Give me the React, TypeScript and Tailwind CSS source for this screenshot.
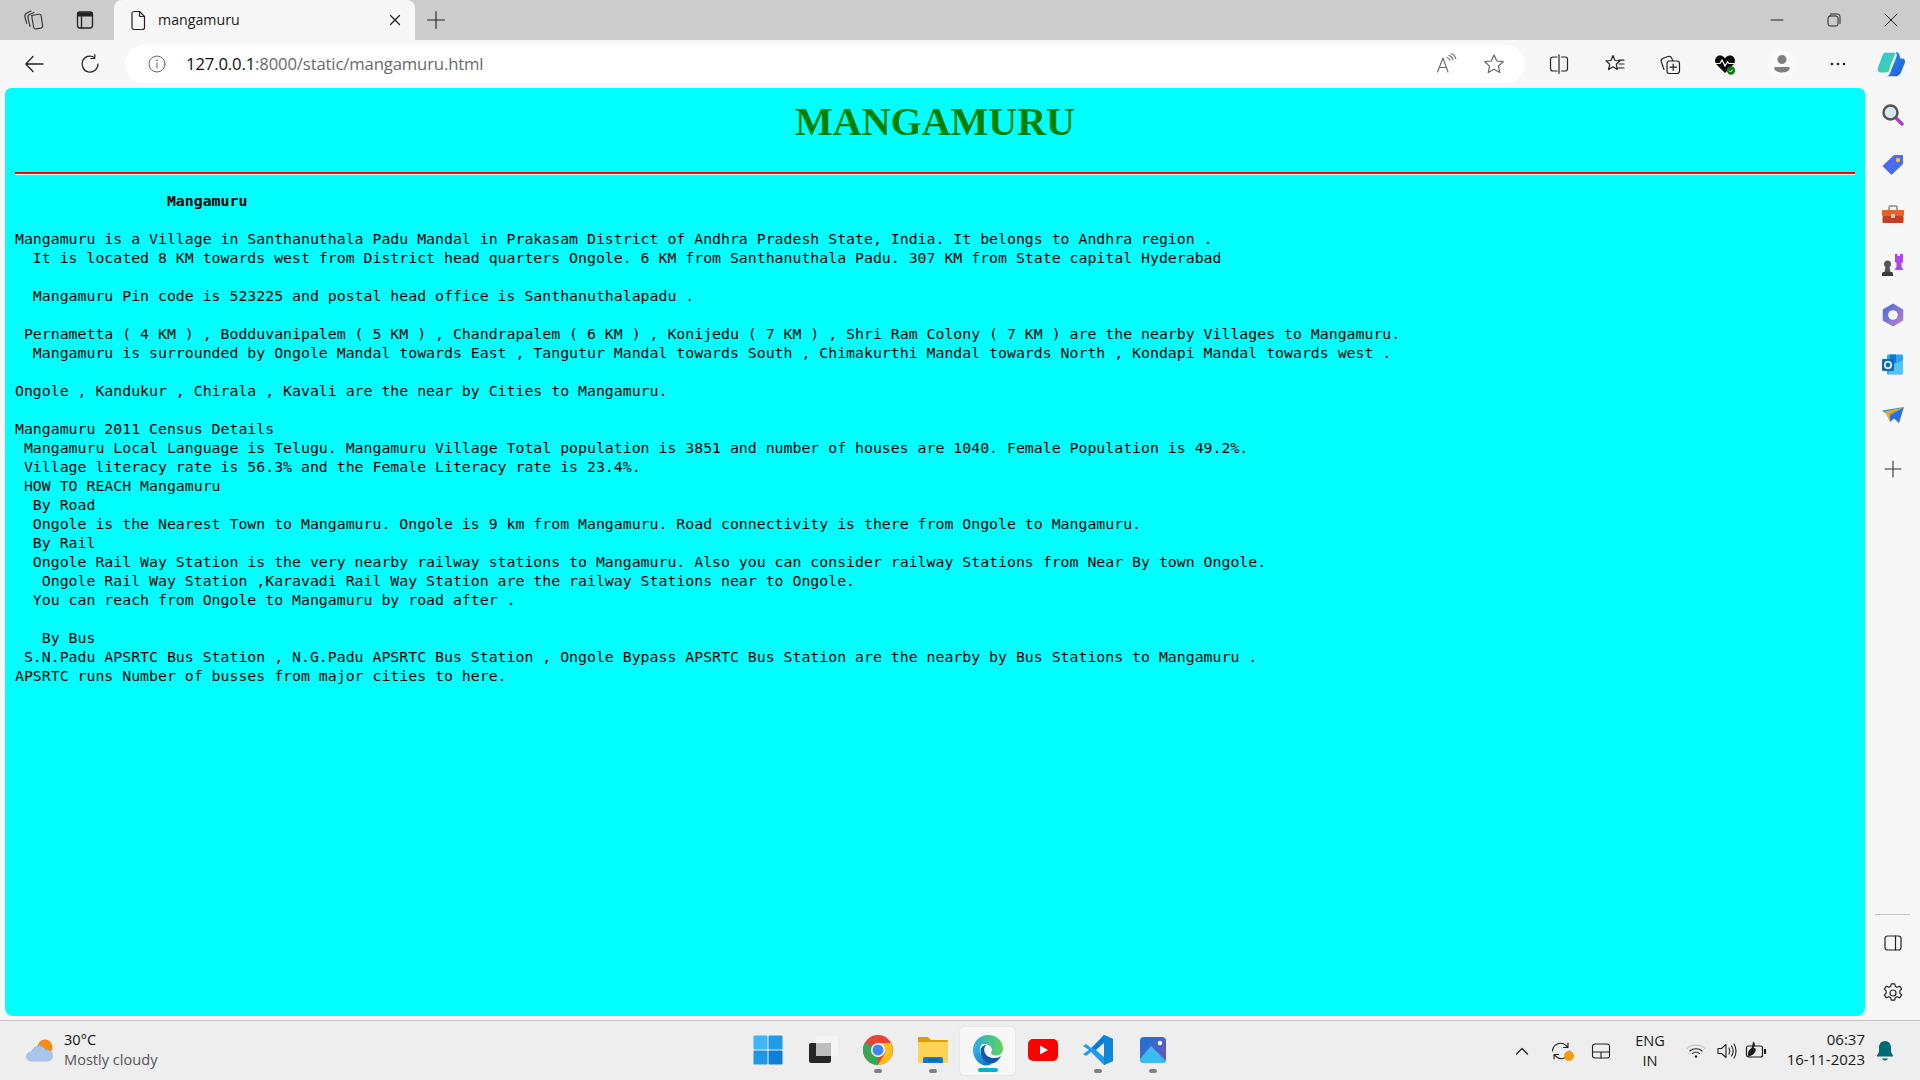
import React from "react";

const lines = [
  "Mangamuru is a Village in Santhanuthala Padu Mandal in Prakasam District of Andhra Pradesh State, India. It belongs to Andhra region .",
  "  It is located 8 KM towards west from District head quarters Ongole. 6 KM from Santhanuthala Padu. 307 KM from State capital Hyderabad",
  "",
  "  Mangamuru Pin code is 523225 and postal head office is Santhanuthalapadu .",
  "",
  " Pernametta ( 4 KM ) , Bodduvanipalem ( 5 KM ) , Chandrapalem ( 6 KM ) , Konijedu ( 7 KM ) , Shri Ram Colony ( 7 KM ) are the nearby Villages to Mangamuru.",
  "  Mangamuru is surrounded by Ongole Mandal towards East , Tangutur Mandal towards South , Chimakurthi Mandal towards North , Kondapi Mandal towards west .",
  "",
  "Ongole , Kandukur , Chirala , Kavali are the near by Cities to Mangamuru.",
  "",
  "Mangamuru 2011 Census Details",
  " Mangamuru Local Language is Telugu. Mangamuru Village Total population is 3851 and number of houses are 1040. Female Population is 49.2%.",
  " Village literacy rate is 56.3% and the Female Literacy rate is 23.4%.",
  " HOW TO REACH Mangamuru",
  "  By Road",
  "  Ongole is the Nearest Town to Mangamuru. Ongole is 9 km from Mangamuru. Road connectivity is there from Ongole to Mangamuru.",
  "  By Rail",
  "  Ongole Rail Way Station is the very nearby railway stations to Mangamuru. Also you can consider railway Stations from Near By town Ongole.",
  "   Ongole Rail Way Station ,Karavadi Rail Way Station are the railway Stations near to Ongole.",
  "  You can reach from Ongole to Mangamuru by road after .",
  "",
  "   By Bus",
  " S.N.Padu APSRTC Bus Station , N.G.Padu APSRTC Bus Station , Ongole Bypass APSRTC Bus Station are the nearby by Bus Stations to Mangamuru .",
  "APSRTC runs Number of busses from major cities to here.",
];

const Line = ({ s = 20, children, vb = 20, c = "#222", w = 1.2 }: any) => (
  <svg width={s} height={s} viewBox={`0 0 ${vb} ${vb}`} fill="none" stroke={c} strokeWidth={w} strokeLinecap="round" strokeLinejoin="round" className="shrink-0">
    {children}
  </svg>
);

function TabBar() {
  return (
    <div className="h-10 bg-[#cccccc] flex items-end shrink-0">
      <div className="w-[114px] h-10 flex items-center pl-[22px] gap-[30px]">
        <svg width="22" height="22" viewBox="0 0 22 22" fill="none" stroke="#333" strokeWidth="1.100" strokeLinecap="round" strokeLinejoin="round">
          <path d="M9.500 6.500 17 5.200a2 2 0 0 1 2.200 1.700l1.400 10a2 2 0 0 1-1.700 2.200l-5 .8a2 2 0 0 1-2.200-1.600l-1.800-10a2 2 0 0 1 .6-1.800z" />
          <path d="M8 17.500 6 9c-.4-1.700.2-3 1.500-3.600L12 3.600" />
          <path d="M4.800 14.500 3 8.500C2.400 6.300 3.200 5 4.800 4L9 2" />
        </svg>
        <Line s={22} vb={22} w={1.300}>
          <rect x="3.500" y="3" width="15" height="16" rx="2.500" />
          <path d="M3.500 5.500h15" strokeWidth="4" strokeLinecap="butt" />
          <path d="M7.500 7v12" />
        </Line>
      </div>
      <div className="w-[301px] h-10 bg-[#f7f7f7] rounded-t-lg flex items-center pl-[13px] pr-[12px] pb-[1px]">
        <Line s={22} vb={22} w={1.200}>
          <path d="M5 4.500A2 2 0 0 1 7 2.500h5.500l5 5v11a2 2 0 0 1-2 2H7a2 2 0 0 1-2-2z" />
          <path d="M12.500 2.500v4a1 1 0 0 0 1 1h4" />
        </Line>
        <span className="ml-[9px] text-[14.2px] text-[#1a1a1a] font-['Open_Sans',sans-serif] flex-1">mangamuru</span>
        <Line s={16} vb={16} w={1.3}>
          <path d="m3.500 3.500 9 9m0-9-9 9" />
        </Line>
      </div>
      <div className="h-10 flex items-center ml-[10px]">
        <Line s={22} vb={22} w={1.100}>
          <path d="M11 2.500v17M2.500 11h17" />
        </Line>
      </div>
      <div className="flex-1" />
      <div className="h-10 flex items-center pr-[1px]">
        <div className="w-[57px] flex justify-center"><Line s={16} vb={16} w={1}><path d="M2 8h12" /></Line></div>
        <div className="w-[57px] flex justify-center">
          <Line s={16} vb={16} w={1}>
            <rect x="2" y="4" width="10" height="10" rx="2" />
            <path d="M4.500 2h7a2.500 2.500 0 0 1 2.500 2.500v7" />
          </Line>
        </div>
        <div className="w-[57px] flex justify-center"><Line s={16} vb={16} w={1}><path d="m2 2 12 12m0-12L2 14" /></Line></div>
      </div>
    </div>
  );
}

function Tool({ children, w = 56 }: any) {
  return <div className="h-10 flex items-center justify-center shrink-0" style={{ width: w }}>{children}</div>;
}

function Toolbar() {
  return (
    <div className="h-[48px] bg-[#f7f7f7] flex items-center shrink-0">
      <div className="w-[125px] flex items-center pl-[23px] gap-[34px] shrink-0">
        <Line s={22} vb={22} w={1.3}><path d="M20 11H3m7-7.500L2.800 11l7.200 7.500" /></Line>
        <Line s={22} vb={22} w={1.2}>
          <path d="M15.500 4.500A8 8 0 1 0 19 11" />
          <path d="M15.800 1.500v4h-4" />
        </Line>
      </div>
      <div className="w-[1400px] h-[38px] bg-white rounded-[19px] flex items-center pl-[22px] pr-[20px] shrink-0">
        <Line s={20} vb={20} c="#666" w={1}>
          <circle cx="10" cy="10" r="8" />
          <path d="M10 9v5" /><circle cx="10" cy="6.300" r=".4" />
        </Line>
        <div className="ml-[19px] flex-1 text-[16.7px] font-['Open_Sans',sans-serif] tracking-[-0.15px]">
          <span className="text-[#111]">127.0.0.1</span><span className="text-[#6a6a6a]">:8000/static/mangamuru.html</span>
        </div>
        <div className="flex items-center gap-[26px] text-[#666]">
          <svg width="22" height="22" viewBox="0 0 22 22" fill="none" stroke="#666" strokeWidth="1.100" strokeLinecap="round" strokeLinejoin="round">
            <path d="M2.500 19 8 5l5 14M4.500 14.500h7" />
            <path d="M12 4.500c1.500.4 2.500 1.300 3 2.800M14 2.500c2.200.6 3.500 2 4 4M16 .8c2.500.6 4.200 2.500 4.800 5" />
          </svg>
          <Line s={22} vb={22} c="#666" w={1.2}><path d="m11 2 2.800 6 6.400.7-4.800 4.400 1.400 6.500L11 16.300l-5.800 3.300 1.400-6.500L1.800 8.700 8.200 8z" /></Line>
        </div>
      </div>
      <div className="flex items-center ml-[6px]">
        <Tool><Line s={22} vb={22}>
          <path d="M9 4H5a2.500 2.500 0 0 0-2.500 2.500v9A2.500 2.500 0 0 0 5 18h4M13.500 4H17a2.500 2.500 0 0 1 2.500 2.500v9A2.500 2.500 0 0 1 17 18h-3.500M11 1.800v18.500" />
        </Line></Tool>
        <Tool><Line s={22} vb={22}>
          <path d="m9 2.500 2 5 5 .4-3.800 3.300 1.200 5.300L9 13.800l-4.400 2.700 1.200-5.300L2 7.900l5-.4z" />
          <path d="M14.800 7.200H20M15 11h5M13.500 15H20" />
        </Line></Tool>
        <div className="-ml-[1px]"><Tool><Line s={22} vb={22}>
          <rect x="8" y="8" width="12.500" height="12.500" rx="2.500" />
          <path d="M14.200 11v6.500M11 14.200h6.500M5 16.500 2.300 9a3 3 0 0 1 1.800-3.700L9 3.500a3 3 0 0 1 3.700 1.600l1 2.500" />
        </Line></Tool></div>
        <div className="-ml-[1px]"><Tool>
          <svg width="24" height="24" viewBox="0 0 24 24">
            <path d="M12 21 3.500 12.500C1.500 10.500 1.500 7 3.500 5c2.200-2 5.500-1.800 7.500.3l1 1.100 1-1.100c2-2.100 5.300-2.300 7.500-.3 2 2 2 5.500 0 7.500z" fill="#0a0a0a" />
            <path d="M2 11.500h5l2-3.500 3 6 2.500-4 1.500 1.500h6" fill="none" stroke="#fff" strokeWidth="1.200" />
            <circle cx="18" cy="18.500" r="4.200" fill="#107c10" />
            <path d="m16 18.500 1.500 1.500 2.500-2.500" fill="none" stroke="#fff" strokeWidth="1" />
          </svg>
        </Tool></div>
        <div className="ml-[1px]"><Tool>
          <div className="w-[28px] h-[28px] rounded-full bg-[#fafafa] flex items-center justify-center">
            <svg width="18" height="20" viewBox="0 0 18 20" fill="#7f7f7f">
              <circle cx="9" cy="5.500" r="4.500" />
              <path d="M2 13h14c.5 0 .8.300.8.800 0 3-3.500 4.700-7.800 4.700s-7.800-1.700-7.800-4.700c0-.5.300-.8.800-.8z" />
            </svg>
          </div>
        </Tool></div>
        <Tool>
          <svg width="22" height="22" viewBox="0 0 22 22" fill="#222"><circle cx="5" cy="11" r="1.300" /><circle cx="11" cy="11" r="1.300" /><circle cx="17" cy="11" r="1.300" /></svg>
        </Tool>
        <div className="ml-[10px]">
          <Tool w={30}>
            <svg width="32" height="28" viewBox="0 0 32 28">
              <defs>
                <linearGradient id="cp1" x1="0" y1="0" x2="1" y2="1"><stop offset="0" stopColor="#2cc5e8" /><stop offset="1" stopColor="#49d68f" /></linearGradient>
                <linearGradient id="cp2" x1="0" y1="0" x2="1" y2="1"><stop offset="0" stopColor="#1d9be8" /><stop offset="1" stopColor="#2457d6" /></linearGradient>
              </defs>
              <path d="M10 2h11l-5 12-2 7c-.5 1.500-1.500 2-3 2H5c-3 0-4-3-3-5l5-13c.5-2 1.500-3 3-3z" fill="url(#cp1)" />
              <path d="M21 1c2 0 3.500 1.500 4 3l1 4h2c2 0 3.500 2 3 4l-4 10c-.8 2.500-2.800 5-5.500 5H11c2 0 3.500-1.500 4-3.500l6-15 1-3c.4-1.500-.4-3.500-1-4.500z" fill="url(#cp2)" />
            </svg>
          </Tool>
        </div>
      </div>
    </div>
  );
}

function Side() {
  const g = "flex items-center justify-center h-[50px] w-full";
  return (
    <div className="w-[55px] bg-[#f7f7f7] flex flex-col items-center shrink-0 pt-[2px]">
      <div className={g}>
        <svg width="24" height="24" viewBox="0 0 24 24">
          <path d="m14 14 7 7" stroke="#b535d4" strokeWidth="3.500" strokeLinecap="round" />
          <circle cx="9.500" cy="9.500" r="7" fill="#d6e9f7" stroke="#555" strokeWidth="2.500" />
        </svg>
      </div>
      <div className={g}>
        <svg width="24" height="24" viewBox="0 0 24 24">
          <path d="M13 2h8a1 1 0 0 1 1 1v8L10.500 22 1.500 13z" fill="#4a6cf0" />
          <circle cx="17" cy="7" r="2.200" fill="#f2c623" />
        </svg>
      </div>
      <div className={g}>
        <svg width="24" height="24" viewBox="0 0 24 24">
          <path d="M8 7V4.500A1.500 1.500 0 0 1 9.500 3h5A1.500 1.500 0 0 1 16 4.500V7" fill="none" stroke="#888" strokeWidth="1.500" />
          <rect x="1" y="7" width="22" height="6" rx="1" fill="#e5622a" />
          <rect x="1.500" y="13" width="21" height="7" rx="1" fill="#c2411c" />
          <rect x="10" y="11" width="4" height="4" rx="1" fill="#c8c8c8" />
        </svg>
      </div>
      <div className={g}>
        <svg width="24" height="24" viewBox="0 0 24 24">
          <path d="M14 1h2.500v2H19V1h3v8l-1.500 1v4l1.500 2v1h-8v-1l1.500-2v-4L14 9z" fill="#b044ee" />
          <circle cx="6.500" cy="11" r="3.500" fill="#555" />
          <path d="M4.500 14h4l1 5h-6z" fill="#555" />
          <path d="M1 20.500c0-1 1-1.500 2-1.500h7c1 0 2 .5 2 1.500V23H1z" fill="#3a3a3a" />
        </svg>
      </div>
      <div className={g}>
        <svg width="24" height="24" viewBox="0 0 24 24">
          <defs>
            <linearGradient id="m1" x1="0" y1="0" x2="1" y2="1"><stop offset="0" stopColor="#3f72d9" /><stop offset="1" stopColor="#c27bd6" /></linearGradient>
          </defs>
          <path d="M12 1.500 21.500 7v10L12 22.500 2.500 17V7z" fill="url(#m1)" stroke="url(#m1)" strokeWidth="1.500" strokeLinejoin="round" />
          <circle cx="12" cy="12" r="4.800" fill="#f7f7f7" />
        </svg>
      </div>
      <div className={g}>
        <svg width="24" height="24" viewBox="0 0 24 24">
          <rect x="6" y="1.500" width="16" height="20" rx="1" fill="#28a8ea" />
          <path d="M9 1.500h6v8H9z" fill="#0a78d4" />
          <path d="M12 12l10-5v14H7z" fill="#50c5f5" />
          <rect x="1" y="6" width="12" height="12" rx="1.200" fill="#0f6cbd" />
          <circle cx="7" cy="12" r="3.200" fill="none" stroke="#fff" strokeWidth="1.500" />
        </svg>
      </div>
      <div className={g}>
        <svg width="24" height="24" viewBox="0 0 24 24">
          <path d="M1 7.500 23 4 8 13z" fill="#1f9cea" />
          <path d="M8 13 23 4l-5 16-5-4.500-4 3.500z" fill="#2a6fe0" />
          <path d="M4 8.500 22.500 4.500 9 11l-.5 7z" fill="#f0a81e" />
        </svg>
      </div>
      <div className={g + " mt-[4px]"}>
        <Line s={20} vb={20} w={1.1} c="#333"><path d="M10 2v16M2 10h16" /></Line>
      </div>
      <div className="flex-1" />
      <div className="w-[35px] h-px bg-[#c4c4c4] mb-[3px]" />
      <div className="h-[50px] flex items-center">
        <Line s={20} vb={20} w={1.2}><rect x="2" y="3" width="16" height="14" rx="2.500" /><path d="M12.500 3v14" /></Line>
      </div>
      <div className="h-[48px] flex items-center justify-center pt-[1px]">
        <Line s={22} vb={22} w={1.200} c="#222">
          <path d="M9.300 1.800h3.400l.6 2.600 1.900.9 2.400-1.100 2.100 2.900-1.900 1.800v2.200l1.900 1.800-2.100 2.900-2.400-1.100-1.900.9-.6 2.600H9.300l-.6-2.600-1.900-.9-2.400 1.100-2.100-2.900 1.900-1.800V8.900L2.300 7.100l2.100-2.900 2.400 1.100 1.900-.9z" />
          <circle cx="11" cy="11" r="3" />
        </Line>
      </div>
    </div>
  );
}

function Page() {
  return (
    <div className="flex-1 min-w-0 ml-[5px] bg-[#00ffff] rounded-t-[6px] rounded-b-[8px] px-[10px] flex flex-col">
      <h1 className="h-[60px] flex items-center justify-center font-['Liberation_Serif',serif] font-bold text-[40px] text-[#008000] leading-none pt-[8px]">MANGAMURU</h1>
      <div className="mt-[24px] h-[3px] bg-[#ff0000] border-b border-white" />
      <pre className="mt-[17px] font-['DejaVu_Sans_Mono',monospace] text-[14.85px] leading-[19px] text-black">
        <b>{"                 Mangamuru"}</b>
        {"\n\n"}
        {lines.join("\n")}
      </pre>
    </div>
  );
}

function Taskbar() {
  const dot = <div className="w-[8px] h-[4px] rounded-full bg-[#808080] mt-[2px]" />;
  const App = ({ children, d, active }: any) => (
    <div className={"w-[55px] h-[48px] rounded-[4px] flex flex-col items-center justify-end pb-[1px] " + (active ? "bg-[#f7f7f7] shadow-[0_0_1px_#bbb]" : "")}>
      <div className="h-[32px] flex items-center justify-center">{children}</div>
      <div className="h-[8px] flex items-center">{d ? dot : active ? <div className="w-[20px] h-[4px] rounded-full bg-[#00b4c4]" /> : null}</div>
    </div>
  );
  return (
    <div className="h-[60px] bg-[#eeeeee] border-t border-[#c4c4c4] flex items-center shrink-0 font-['Open_Sans',sans-serif]">
      <div className="w-[740px] shrink-0 flex items-center pl-[25px]">
        <svg width="32" height="28" viewBox="0 0 32 28">
          <circle cx="20" cy="10" r="7.500" fill="#f58a12" />
          <path d="M7 24c-3 0-5.500-2-5.500-4.500S3.500 15 6.500 15c.8-3.500 4-6 7.500-6 3 0 5.500 1.500 6.500 4 .5-.2 1-.2 1.500-.2 3 0 5.500 2.500 5.500 5.600 0 3-2 5.600-5 5.600z" fill="#a9c6ee" stroke="#8cacdc" strokeWidth=".6" />
        </svg>
        <div className="ml-[7px] mb-[4px] flex flex-col text-[14.6px] leading-[20px]">
          <span className="text-[#111]">30°C</span>
          <span className="text-[#555]">Mostly cloudy</span>
        </div>
      </div>
      <div className="flex items-center">
        <App>
          <svg width="30" height="30" viewBox="0 0 30 30">
            <rect x="0.500" y="0.500" width="14" height="14" rx="1" fill="#3fb8f5" />
            <rect x="15.500" y="0.500" width="14" height="14" rx="1" fill="#1f9be8" />
            <rect x="0.500" y="15.500" width="14" height="14" rx="1" fill="#1d97e6" />
            <rect x="15.500" y="15.500" width="14" height="14" rx="1" fill="#0c7fd8" />
          </svg>
        </App>
        <App>
          <svg width="30" height="30" viewBox="0 0 30 30">
            <rect x="1" y="8" width="22" height="20" rx="2" fill="#262626" />
            <rect x="8" y="1" width="22" height="20" rx="2" fill="#f4f4f4" />
            <rect x="8" y="8" width="15" height="13" fill="#bdbdbd" />
          </svg>
        </App>
        <App d>
          <svg width="30" height="30" viewBox="0 0 30 30">
            <circle cx="15" cy="15" r="15" fill="#ea4335" />
            <path d="M15 15 2 22.500A15 15 0 0 0 15 30z" fill="#34a853" />
            <path d="M2 7.500A15 15 0 0 0 2 22.500L15 15z" fill="#34a853" />
            <path d="M15 8h13a15 15 0 0 1-13 22l7-12z" fill="#fbc116" />
            <circle cx="15" cy="15" r="7" fill="#fff" />
            <circle cx="15" cy="15" r="5.500" fill="#4285f4" />
          </svg>
        </App>
        <App d>
          <svg width="30" height="30" viewBox="0 0 30 30">
            <path d="M0 3a1 1 0 0 1 1-1h9l3 3h16a1 1 0 0 1 1 1v4H0z" fill="#dc9f0a" />
            <path d="M0 7h30v20a1 1 0 0 1-1 1H1a1 1 0 0 1-1-1z" fill="#fcd455" />
            <path d="M5 24a2 2 0 0 1 2-2h16a2 2 0 0 1 2 2v4H5z" fill="#0f78d4" />
            <path d="M10 25h10" stroke="#0a4c8a" strokeWidth="1" />
          </svg>
        </App>
        <App active>
          <svg width="32" height="32" viewBox="0 0 32 32">
            <defs>
              <linearGradient id="e1" x1="0" y1="0" x2="1" y2="1"><stop offset="0" stopColor="#35c1f1" /><stop offset="1" stopColor="#0b6ec2" /></linearGradient>
              <linearGradient id="e2" x1="0" y1="0" x2="1" y2="0"><stop offset="0" stopColor="#2ba8e0" /><stop offset="1" stopColor="#5ed55a" /></linearGradient>
            </defs>
            <path d="M1 15C2 6.500 8.500 1 16 1c9 0 15 6 15 14 0 4-3 6.500-7 6.500-3 0-5-1-5-2.500 0-1 1-1.300 1-3 0-3.500-3.500-6-8-6-5 0-9.500 2-11 5z" fill="url(#e2)" />
            <path d="M1 15c2-4 6.500-5.500 10.500-5.500C8 11 7 15 8.500 20c1.500 5 6 8.500 11 10-2 1-4 1.500-6 1.500C6 31 .5 23 1 15z" fill="url(#e1)" />
            <path d="M8.500 17c0-3.500 2.800-6 6-6-2 1.500-3 4-2 7 1.300 4 6 6.500 11 6 2 0 4-1 5.500-2-2 5-7.500 8.500-12 7.500C12 28 8.500 23 8.500 17z" fill="#0c5aa6" />
          </svg>
        </App>
        <App>
          <svg width="30" height="22" viewBox="0 0 30 22">
            <rect width="30" height="22" rx="5" fill="#ff0000" />
            <path d="m12 6.500 8 4.500-8 4.500z" fill="#fff" />
          </svg>
        </App>
        <App d>
          <svg width="30" height="30" viewBox="0 0 30 30">
            <path d="M21 0 30 4v22l-9 4L8 17l-5 4-3-2 6-4-6-4 3-2 5 4z" fill="#1f9cf0" />
            <path d="M21 0 9 13l4 2 8-8z" fill="#0b7dd0" />
            <path d="M21 8 13 15l8 7z" fill="#eeeeee" />
            <path d="M21 0 30 4v22l-9 4z" fill="#0f86d8" />
          </svg>
        </App>
        <App d>
          <svg width="28" height="28" viewBox="0 0 28 28">
            <defs>
              <linearGradient id="p1" x1="0" y1="0" x2="1" y2="1"><stop offset="0" stopColor="#1577d6" /><stop offset="1" stopColor="#7a4fb8" /></linearGradient>
            </defs>
            <rect width="26" height="26" x="1" y="1" rx="4" fill="url(#p1)" />
            <circle cx="21" cy="7" r="2.300" fill="#fff" />
            <path d="M1 23 12 10l15 15v-1a3 3 0 0 1-3 3H5a4 4 0 0 1-4-4z" fill="#39bdf0" />
          </svg>
        </App>
      </div>
      <div className="flex-1" />
      <div className="flex items-center text-[#1a1a1a]">
        <Line s={16} vb={16} w={1.3}><path d="m2.500 11 5.500-5.500 5.500 5.500" /></Line>
        <div className="ml-[20px] relative">
          <Line s={22} vb={22} w={1.100}>
            <path d="M2.500 11A8 8 0 0 1 16 5.500l2 1.800M18 3v4.500h-4.500M19.500 11A8 8 0 0 1 6 16.500l-2-1.800M4 19v-4.500h4.500" />
          </Line>
          <div className="absolute right-[-2px] bottom-[1px] w-[10px] h-[10px] rounded-full bg-[#f59a0c]" />
        </div>
        <div className="ml-[18px]">
          <Line s={22} vb={22} w={1.100}>
            <rect x="2.500" y="4" width="17" height="14" rx="2.500" />
            <path d="M2.500 12h17M11 12v6" />
          </Line>
        </div>
        <div className="w-[40px] ml-[18px] mb-[2px] text-center text-[14.6px] leading-[20px]">ENG<br />IN</div>
        <div className="ml-[15px]">
          <svg width="22" height="22" viewBox="0 0 22 22" fill="none" strokeLinecap="round">
            <path d="M2 8.500c5-4.500 13-4.500 18 0" stroke="#c0c0c0" strokeWidth="1.100" />
            <path d="M4.800 11c3.500-3 9-3 12.400 0M7.500 13.500c2-1.700 5-1.700 7 0" stroke="#222" strokeWidth="1.100" />
            <circle cx="11" cy="16.500" r="1.200" fill="#222" />
          </svg>
        </div>
        <div className="ml-[9px]">
          <Line s={22} vb={22} w={1.100}>
            <path d="M2 8.500h3.500L10 4.500v13L5.500 13.500H2z" />
            <path d="M13 8c1 1.800 1 4.200 0 6M15.500 6c2 3 2 7 0 10M18 4c2.700 4 2.700 10 0 14" />
          </Line>
        </div>
        <div className="ml-[7px]">
          <svg width="22" height="22" viewBox="0 0 22 22" fill="none" stroke="#1a1a1a" strokeWidth="1.200">
            <rect x="1.500" y="6" width="16" height="11" rx="2" />
            <path d="M19 9.500h1.500v4H19" fill="#1a1a1a" />
            <path d="M8 1.500c3 2 2 5 .5 6.500 3-.5 3 3 0 6-1 1-2.500 1.500-5 3-1-3-.5-5 .5-6.500.8-1.500 2.500-2 3-3.500.4-1.500.8-3.500 1-5.500z" fill="#1a1a1a" stroke="none" />
          </svg>
        </div>
        <div className="w-[90px] ml-[8px] mb-[4px] text-right text-[15px] leading-[20px] text-[#1a1a1a]">06:37<br />16-11-2023</div>
        <div className="ml-[11px] mr-[26px]">
          <svg width="18" height="22" viewBox="0 0 18 22" fill="#006a75">
            <path d="M9 1c-3.500 0-6 2.800-6 6.500V12L1 15.500v1h16v-1L15 12V7.500C15 3.800 12.500 1 9 1z" />
            <path d="M6 18.500h6c-.4 1.300-1.600 2-3 2s-2.600-.7-3-2z" />
          </svg>
        </div>
      </div>
    </div>
  );
}

export default function App() {
  return (
    <div className="w-[1920px] h-[1080px] flex flex-col overflow-hidden bg-[#f7f7f7]">
      <TabBar />
      <Toolbar />
      <div className="h-[928px] flex shrink-0">
        <Page />
        <Side />
      </div>
      <div className="h-[4px] bg-[#f7f7f7] shrink-0" />
      <Taskbar />
    </div>
  );
}
